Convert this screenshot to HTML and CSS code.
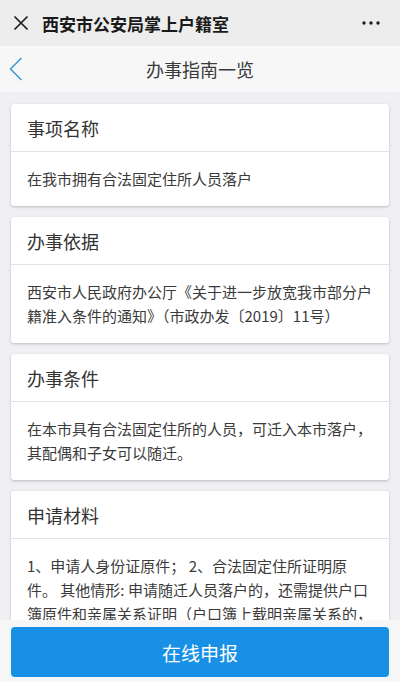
FILE: index.html
```html
<!DOCTYPE html>
<html lang="zh-CN">
<head>
  <meta charset="UTF-8">
  <meta name="viewport" content="width=device-width, initial-scale=1.0">
  <title>办事指南一览</title>
  <link rel="stylesheet" href="styles.css">
</head>
<body>
  <!-- WeChat style title bar -->
  <header class="topbar">
    <svg class="close-icon" width="16" height="16" viewBox="0 0 16 16">
      <path d="M1.5 1.5 L14.5 14.5 M14.5 1.5 L1.5 14.5" stroke="#1f1f1f" stroke-width="1.7" fill="none"/>
    </svg>
    <span class="topbar-title">西安市公安局掌上户籍室</span>
    <svg class="more-icon" width="20" height="6" viewBox="0 0 20 6">
      <circle cx="3" cy="3" r="1.7" fill="#1f1f1f"/>
      <circle cx="10" cy="3" r="1.7" fill="#1f1f1f"/>
      <circle cx="17" cy="3" r="1.7" fill="#1f1f1f"/>
    </svg>
  </header>

  <nav class="navbar">
    <svg class="back-icon" width="14" height="24" viewBox="0 0 14 24">
      <polyline points="12.5,1 1.5,12 12.5,23" stroke="#3b98d6" stroke-width="1.5" fill="none"/>
    </svg>
    <span class="navbar-title">办事指南一览</span>
  </nav>

  <main class="content">
    <section class="card">
      <h3 class="card-title">事项名称</h3>
      <p class="card-body">在我市拥有合法固定住所人员落户</p>
    </section>

    <section class="card">
      <h3 class="card-title">办事依据</h3>
      <p class="card-body">西安市人民政府办公厅《关于进一步放宽我市部分户籍准入条件的通知》（市政办发〔2019〕11号）</p>
    </section>

    <section class="card">
      <h3 class="card-title">办事条件</h3>
      <p class="card-body">在本市具有合法固定住所的人员，可迁入本市落户，其配偶和子女可以随迁。</p>
    </section>

    <section class="card">
      <h3 class="card-title">申请材料</h3>
      <p class="card-body">1、申请人身份证原件； 2、合法固定住所证明原件。 其他情形: 申请随迁人员落户的，还需提供户口簿原件和亲属关系证明（户口簿上载明亲属关系的，可不再提供亲属关系证明）。</p>
    </section>
  </main>

  <footer class="footer">
    <button class="submit-btn" type="button">在线申报</button>
  </footer>
</body>
</html>
```

FILE: styles.css
```css
* {
  margin: 0;
  padding: 0;
  box-sizing: border-box;
}

body {
  font-family: "Noto Sans CJK SC", "Noto Sans", sans-serif;
  background-color: #efeff4;
  color: #333;
  height: 682px;
  display: flex;
  flex-direction: column;
  overflow: hidden;
}

/* Title bar */
.topbar {
  height: 46px;
  flex-shrink: 0;
  background-color: #ededed;
  display: flex;
  align-items: center;
  padding: 0 13px;
}

.close-icon {
  margin-right: 13px;
}

.topbar-title {
  font-size: 17px;
  font-weight: bold;
  color: #1a1a1a;
  flex: 1;
}

.more-icon {
  margin-right: 6px;
}

/* Navigation bar */
.navbar {
  height: 46px;
  flex-shrink: 0;
  background-color: #f7f7f7;
  display: flex;
  align-items: center;
  justify-content: center;
  position: relative;
}

.back-icon {
  position: absolute;
  left: 9px;
  top: 11px;
}

.navbar-title {
  font-size: 18px;
  color: #3a3a3a;
}

/* Cards */
.content {
  flex: 1;
  overflow: hidden;
  padding: 12px 11px 0;
  display: flex;
  flex-direction: column;
  gap: 11px;
}

.card {
  background-color: #fff;
  border-radius: 3px;
  box-shadow: 0 1px 3px rgba(0, 0, 0, 0.22);
  flex-shrink: 0;
}

.card-title {
  height: 48px;
  display: flex;
  align-items: center;
  padding: 0 16px;
  font-size: 18px;
  font-weight: normal;
  color: #333;
  border-bottom: 1px solid #e3e3e3;
}

.card-body {
  padding: 15px 15px 15px 16px;
  font-size: 15px;
  line-height: 24px;
  color: #3a3a3a;
}

/* Bottom button */
.footer {
  height: 62px;
  flex-shrink: 0;
  background-color: #f6f6f6;
  padding: 7px 11px 5px;
}

.submit-btn {
  width: 100%;
  height: 50px;
  border: none;
  border-radius: 4px;
  background-color: #1790e6;
  color: #fff;
  font-family: inherit;
  font-size: 19px;
}
```
